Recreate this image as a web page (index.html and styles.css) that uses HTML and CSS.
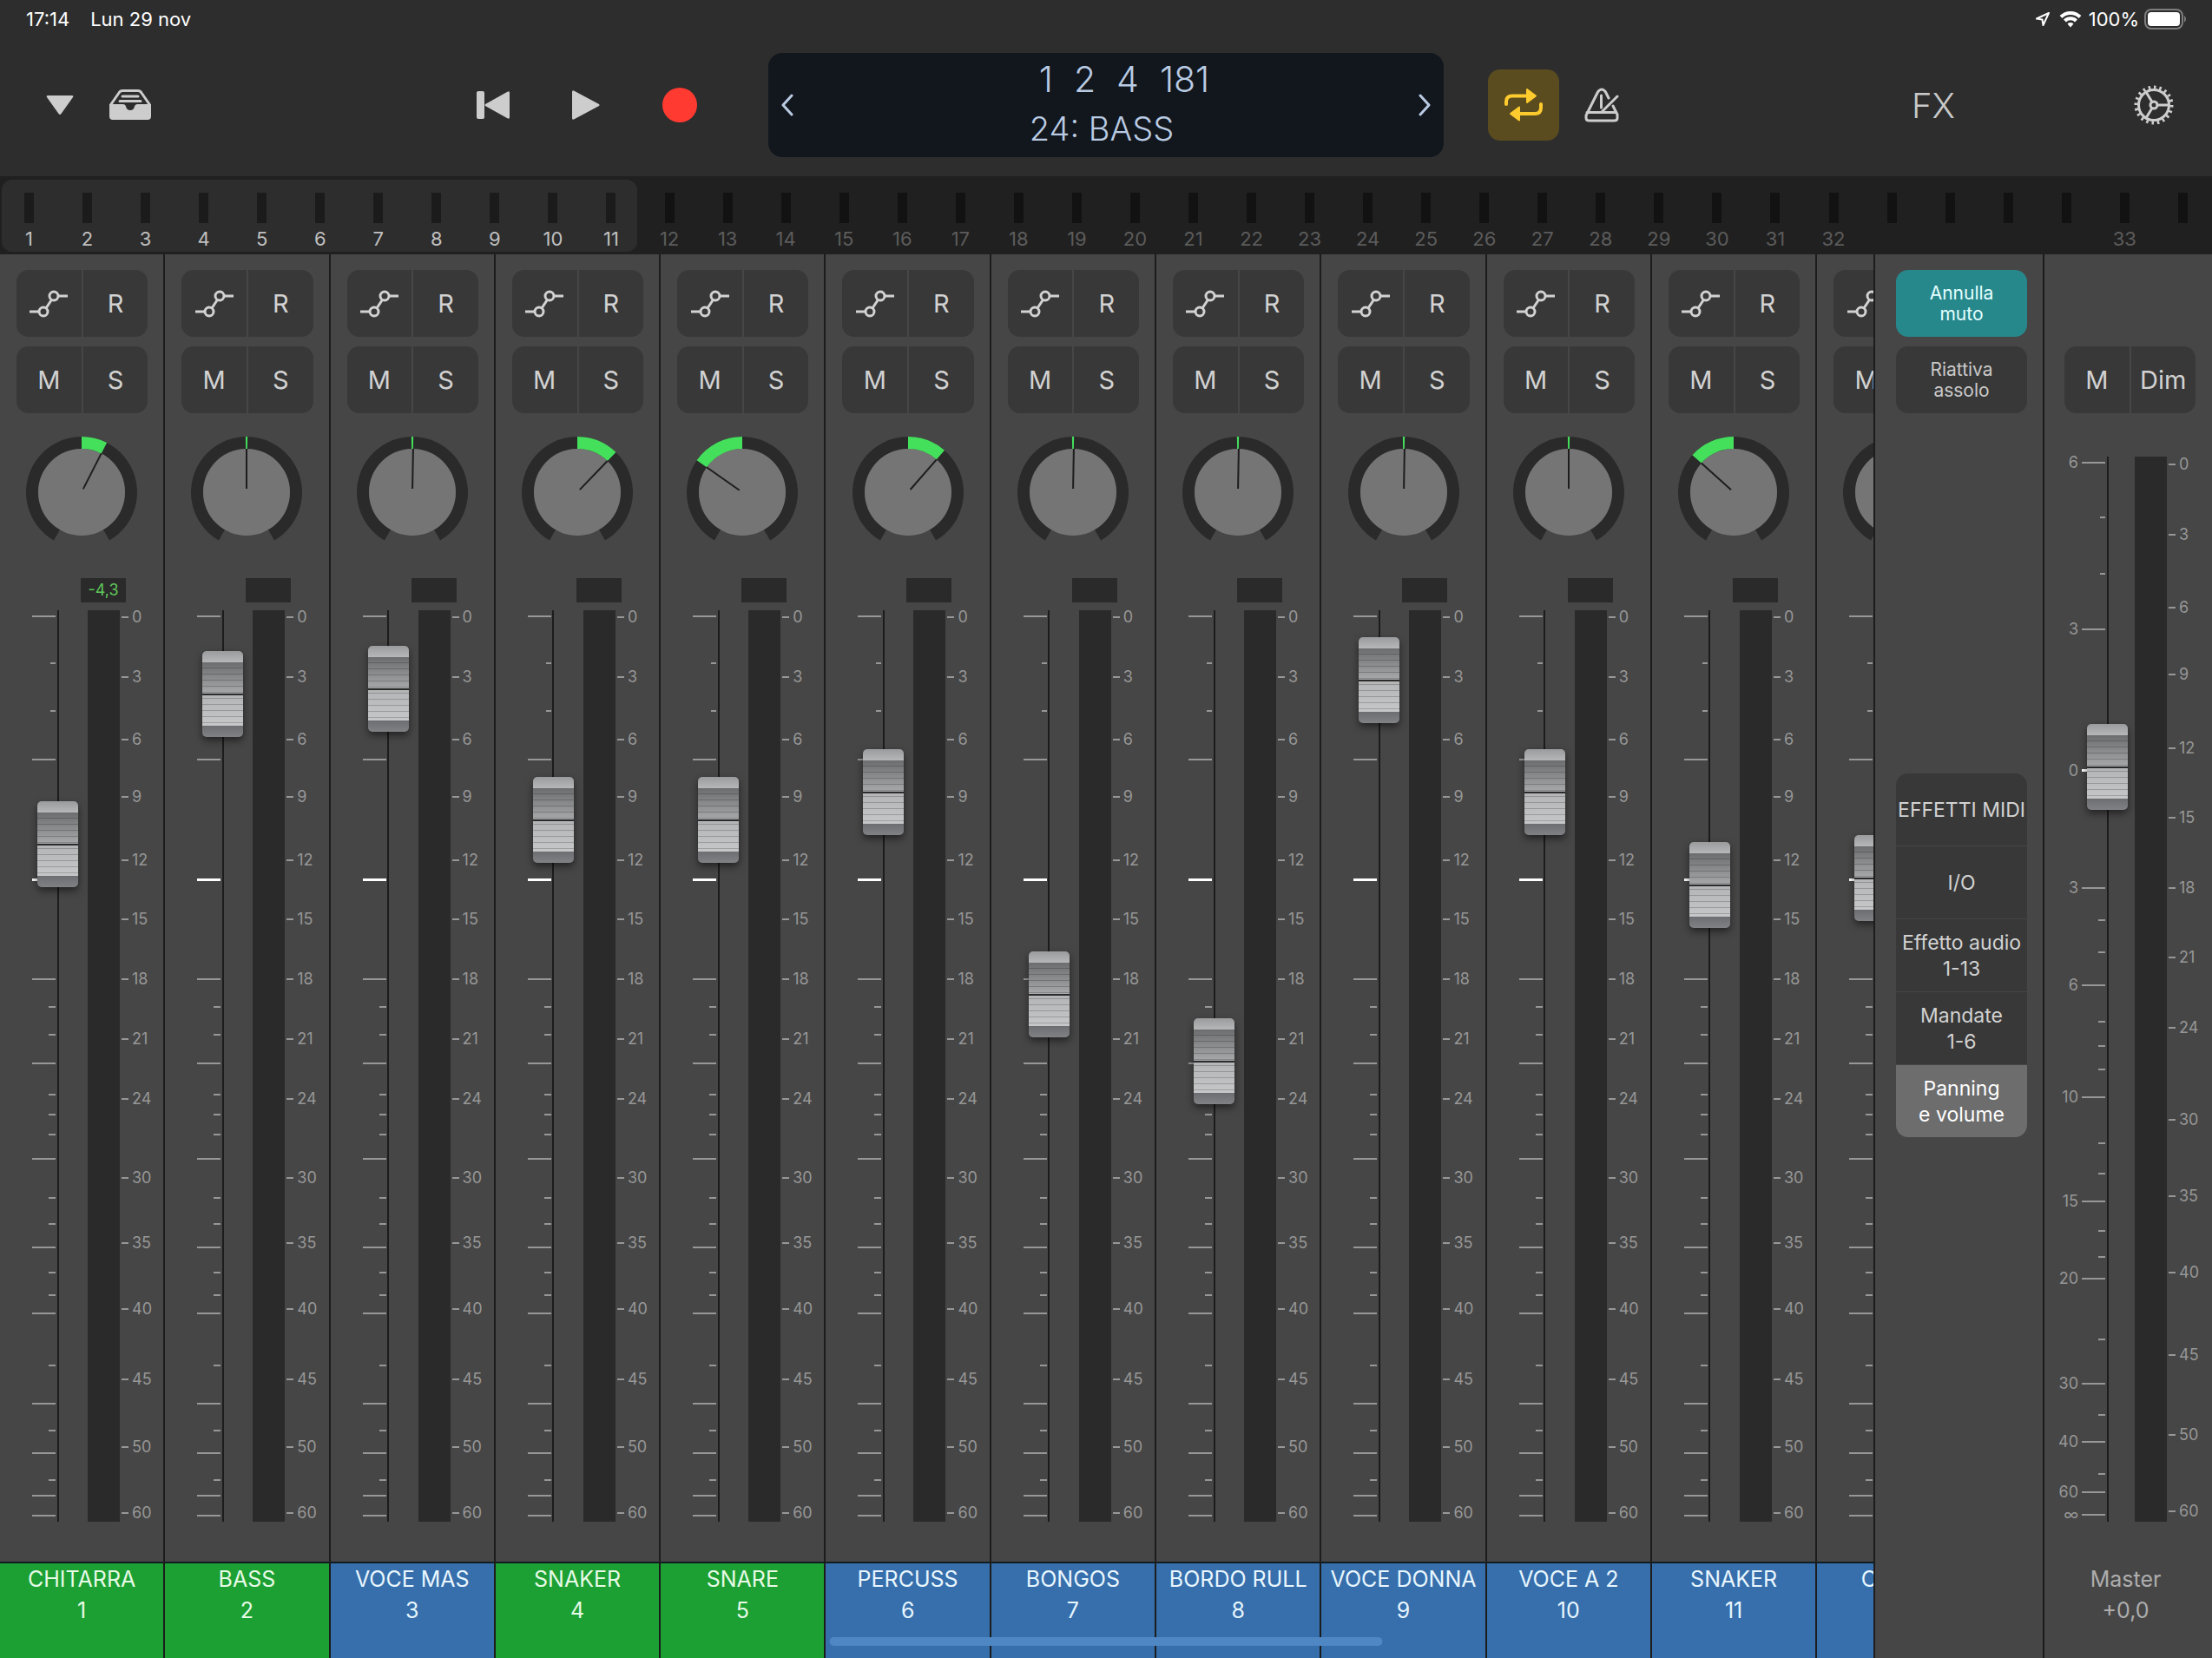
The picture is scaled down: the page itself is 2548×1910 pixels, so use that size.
FILE: index.html
```html
<!DOCTYPE html>
<html lang="it">

<head>
    <meta charset="UTF-8" />
    <meta name="viewport" content="width=device-width, initial-scale=1.0" />
    <title>Mixer</title>
    <link rel="stylesheet" href="styles.css">
</head>

<body>
    <div class="status">
        <span>17:14</span>
        <span class="date">Lun 29 nov</span>
        <svg class="location" width="18" height="18" viewBox="0 0 18 18">
            <path d="M16 2 L2 8.5 L8.5 9.5 L9.5 16 Z" />
        </svg>
        <svg class="wifi" width="26" height="20" viewBox="0 0 26 20">
            <path d="M2 7.5 A15.5 15.5 0 0 1 24 7.5" />
            <path d="M6.5 12 A9.2 9.2 0 0 1 19.5 12" />
            <path class="dot" d="M13 19.5 L9.5 15.5 A5 5 0 0 1 16.5 15.5 Z" />
        </svg>
        <span>100%</span>
        <svg class="battery" width="50" height="24" viewBox="0 0 50 24">
            <rect class="shell" x="1" y="1" width="43" height="22" rx="7" />
            <rect class="charge" x="4" y="4" width="37" height="16" rx="4" />
            <path class="tip" d="M46 8 A5 5 0 0 1 46 16 Z" />
        </svg>
    </div>

    <header class="toolbar">
        <div class="side left">
            <button class="tool" type="button" aria-label="Menu">
                <svg width="32" height="24" viewBox="0 0 32 24">
                    <path class="fill" d="M2 1 H30 Q32 1 31 3 L17.5 22 Q16 24 14.5 22 L1 3 Q0 1 2 1 Z" />
                </svg>
            </button>
            <button class="tool tray" type="button" aria-label="Browser">
                <svg width="48" height="36" viewBox="0 0 48 36">
                    <path class="line" d="M2 17 L11 4 Q12.500 1.500 15 1.500 H33 Q35.500 1.500 37 4 L46 17" />
                    <path class="line" d="M15 8 H33 M12 13.500 H36" />
                    <path class="fill" d="M0 17 H16 Q18.500 17 19 19.500 Q20 24 24 24 Q28 24 29 19.500 Q29.500 17 32 17 H48 V31 Q48 35 44 35 H4 Q0 35 0 31 Z" />
                </svg>
            </button>
            <div class="transport">
                <button class="tool" type="button" aria-label="Inizio">
                    <svg width="38" height="34" viewBox="0 0 38 34">
                        <rect class="fill" x="0" y="1" width="9" height="32" rx="2" />
                        <path class="fill" d="M35 2 Q38 0 38 3 V31 Q38 34 35 32 L10 18 Q9 17 10 16 Z" />
                    </svg>
                </button>
                <button class="tool" type="button" aria-label="Riproduci">
                    <svg width="32" height="34" viewBox="0 0 32 34">
                        <path class="fill" d="M0 2 Q0 -1 3 1 L31 16 Q32 17 31 18 L3 33 Q0 35 0 32 Z" />
                    </svg>
                </button>
                <button class="tool record" type="button" aria-label="Registra"></button>
            </div>
        </div>

        <div class="lcd">
            <button class="arrow" type="button" aria-label="Precedente">
                <svg width="14" height="26" viewBox="0 0 14 26"><path d="M12 2 L2 13 L12 24" /></svg>
            </button>
            <div class="readout">
                <div class="position"><span>1</span><span>2</span><span>4</span><span>181</span></div>
                <div class="track">24: BASS</div>
            </div>
            <button class="arrow" type="button" aria-label="Successivo">
                <svg width="14" height="26" viewBox="0 0 14 26"><path d="M2 2 L12 13 L2 24" /></svg>
            </button>
        </div>

        <div class="side right">
            <button class="cycle" type="button" aria-label="Ciclo">
                <svg width="44" height="38" viewBox="0 0 44 38">
                    <path class="loop" d="M2 18 V15 Q2 8.500 9 8.500 H27 M42 18 V22 Q42 29 35 29 H16" />
                    <path class="head" d="M26 1 L36 8.500 L26 16 Z M17 21.500 L7 29 L17 36.500 Z" />
                </svg>
            </button>
            <button class="tool metronome" type="button" aria-label="Metronomo">
                <svg width="40" height="40" viewBox="0 0 40 40">
                    <path class="line" d="M28 12 L24.500 5 Q20 -1 15.500 5 L2 32 V35 Q2 38 6 38 H34 Q38 38 38 35 V31 L33 21 M3 28.500 H37 M19.500 9 V23 M20 28 L38 10" />
                </svg>
            </button>
            <button class="tool fx" type="button">FX</button>
            <button class="tool gear" type="button" aria-label="Impostazioni">
                <svg width="46" height="46" viewBox="-23 -23 46 46">
                    <circle class="teeth" r="20.500" pathLength="100" />
                    <circle class="line" r="17.500" />
                    <circle class="line" r="4" />
                    <path class="line" d="M4 0 H17 M-2 -3.500 L-9 -15 M-2 3.500 L-9 15" />
                </svg>
            </button>
        </div>
    </header>

    <div class="ruler" id="ruler"></div>

    <main class="mixer">
        <div class="strips" id="strips"></div>

        <section class="panel">
            <div class="panel-top">
                <button class="pad active" type="button">Annulla<br>muto</button>
                <button class="pad" type="button">Riattiva<br>assolo</button>
            </div>
            <div class="views">
                <button type="button">EFFETTI MIDI</button>
                <button type="button">I/O</button>
                <button type="button">Effetto audio<br>1-13</button>
                <button type="button">Mandate<br>1-6</button>
                <button class="selected" type="button">Panning<br>e volume</button>
            </div>
        </section>

        <section class="master">
            <div class="pair">
                <button type="button">M</button>
                <button type="button">Dim</button>
            </div>
            <div class="level">
                <ol class="gain" id="masterGain"></ol>
                <input class="fader" type="range" min="0" max="1000" value="727" aria-label="Volume Master">
                <div class="meter"></div>
                <ol class="scale" id="masterScale"></ol>
            </div>
            <div class="label">Master<br>+0,0</div>
        </section>
    </main>

    <div class="home-bar"></div>

    <script>
        var channels = [
            { name: "CHITARRA", color: "green", pan: 27, level: 769, peak: "-4,3" },
            { name: "BASS", color: "green", pan: 0, level: 951 },
            { name: "VOCE MAS", color: "blue", pan: 1, level: 957 },
            { name: "SNAKER", color: "green", pan: 44, level: 798 },
            { name: "SNARE", color: "green", pan: -55, level: 798 },
            { name: "PERCUSS", color: "blue", pan: 41, level: 832 },
            { name: "BONGOS", color: "blue", pan: 1, level: 587 },
            { name: "BORDO RULL", color: "blue", pan: 1, level: 506 },
            { name: "VOCE DONNA", color: "blue", pan: 1, level: 967 },
            { name: "VOCE A 2", color: "blue", pan: 0, level: 832 },
            { name: "SNAKER", color: "blue", pan: -48, level: 719 },
            { name: "CAJON", color: "blue", pan: 0, level: 728 }
        ];

        // distance from the top of the fader, mark type, optional text
        var gainMarks = [
            [7, "long"], [61, "tiny"], [116, "tiny"], [172, "long"], [311, "unity"], [425, "long"],
            [457, "short"], [489, "short"], [522, "long"], [558, "short"], [581, "short"], [604, "short"],
            [632, "long"], [677, "short"], [707, "short"], [734, "long"], [763, "short"], [789, "short"],
            [810, "long"], [870, "short"], [914, "long"], [945, "short"], [971, "long"], [1002, "short"],
            [1020, "long"], [1043, "long"], [1050, "end"]
        ];
        var scaleMarks = [
            [8, "short", "0"], [77, "short", "3"], [149, "short", "6"], [215, "short", "9"],
            [288, "short", "12"], [356, "short", "15"], [425, "short", "18"], [494, "short", "21"],
            [563, "short", "24"], [654, "short", "30"], [729, "short", "35"], [805, "short", "40"],
            [886, "short", "45"], [964, "short", "50"], [1040, "short", "60"], [1050, "end"]
        ];
        var masterGainMarks = [
            [7, "long", "6"], [70, "tiny"], [135, "tiny"], [199, "long", "3"], [362, "unity", "0"],
            [497, "long", "3"], [534, "short"], [571, "short"], [609, "long", "6"], [651, "short"],
            [679, "short"], [706, "short"], [738, "long", "10"], [791, "short"], [826, "short"],
            [858, "long", "15"], [892, "short"], [922, "short"], [947, "long", "20"], [1017, "short"],
            [1068, "long", "30"], [1104, "short"], [1135, "long", "40"], [1172, "short"],
            [1193, "long", "60"], [1219, "long", "∞"], [1227, "end"]
        ];
        var masterScaleMarks = [
            [9, "short", "0"], [90, "short", "3"], [174, "short", "6"], [251, "short", "9"],
            [336, "short", "12"], [416, "short", "15"], [497, "short", "18"], [577, "short", "21"],
            [658, "short", "24"], [764, "short", "30"], [852, "short", "35"], [940, "short", "40"],
            [1035, "short", "45"], [1127, "short", "50"], [1215, "short", "60"], [1227, "end"]
        ];

        function marksHtml(marks) {
            var last = 0;
            return marks.map(function (mark) {
                var gap = mark[0] - last;
                last = mark[0];
                return `<li class="${mark[1]}" style="flex-grow:${gap}">${mark[2] ? `<span>${mark[2]}</span>` : ""}</li>`;
            }).join("");
        }

        function point(angle, radius) {
            var a = angle * Math.PI / 180;
            return (radius * Math.sin(a)).toFixed(1) + " " + (-radius * Math.cos(a)).toFixed(1);
        }

        function arc(from, to) {
            var large = to - from > 180 ? 1 : 0;
            return `M${point(from, 57)} A57 57 0 ${large} 1 ${point(to, 57)}`;
        }

        function knobHtml(pan, name) {
            // a centred knob still shows a thin green mark
            var from = Math.min(pan, -1);
            var to = Math.max(pan, 1);
            if (pan > 1) from = 0;
            if (pan < -1) to = 0;
            return `<div class="knob">
                <svg width="128" height="128" viewBox="-64 -64 128 128">
                    <path class="ring" d="${arc(-150, 150)}" />
                    <circle class="disc" r="50" />
                    <path class="amount" d="${arc(from, to)}" />
                    <path class="needle" d="M${point(pan, 4)} L${point(pan, 50)}" />
                </svg>
                <input type="range" min="-150" max="150" value="${pan}" aria-label="Pan ${name}">
            </div>`;
        }

        var automationIcon = `<svg width="44" height="32" viewBox="0 0 44 32">
            <path d="M0 25 H11 M19 21 L25 12 M33 7 H44" />
            <circle cx="16" cy="25" r="5" />
            <circle cx="28" cy="7" r="5" />
        </svg>`;

        document.getElementById("strips").innerHTML = channels.map(function (ch, i) {
            return `<section class="strip">
                <div class="controls">
                    <div class="pair">
                        <button type="button" aria-label="Automazione">${automationIcon}</button>
                        <button type="button">R</button>
                    </div>
                    <div class="pair">
                        <button type="button">M</button>
                        <button type="button">S</button>
                    </div>
                    ${knobHtml(ch.pan, ch.name)}
                </div>
                <div class="peak">${ch.peak || ""}</div>
                <div class="level">
                    <ol class="gain">${marksHtml(gainMarks)}</ol>
                    <input class="fader" type="range" min="0" max="1000" value="${ch.level}" aria-label="Volume ${ch.name}">
                    <div class="meter"></div>
                    <ol class="scale">${marksHtml(scaleMarks)}</ol>
                </div>
                <div class="name ${ch.color}">${ch.name}<br>${i + 1}</div>
            </section>`;
        }).join("");

        document.getElementById("masterGain").innerHTML = marksHtml(masterGainMarks);
        document.getElementById("masterScale").innerHTML = marksHtml(masterScaleMarks);

        // 38 ticks: the first 11 are on screen, the master is number 33
        function rulerCells(from, to) {
            var html = "";
            for (var i = from; i <= to; i++) {
                var text = i <= 32 ? i : (i === 37 ? 33 : "");
                html += `<div class="cell">${text}</div>`;
            }
            return html;
        }
        document.getElementById("ruler").innerHTML =
            `<div class="cells visible">${rulerCells(1, 11)}</div><div class="cells rest">${rulerCells(12, 38)}</div>`;
    </script>
</body>

</html>
```
FILE: styles.css
```css
* {
    box-sizing: border-box;
}

body {
    margin: 0;
    height: 100vh;
    display: flex;
    flex-direction: column;
    overflow: hidden;
    background-color: #2d2d2d;
    color: #c9c9c9;
    font-family: Inter, "Liberation Sans", sans-serif;
    font-size: 22px;
}

button {
    margin: 0;
    padding: 0;
    border: none;
    background: none;
    color: inherit;
    font: inherit;
    cursor: pointer;
}

svg {
    display: block;
}

ol {
    list-style: none;
    margin: 0;
    padding: 0;
}

/* status bar */
.status {
    display: flex;
    align-items: center;
    height: 44px;
    padding: 0 28px 0 30px;
    color: white;
    flex: none;
}

.date {
    margin-left: 24px;
    margin-right: auto;
}

.location {
    fill: none;
    stroke: white;
    stroke-width: 2;
    stroke-linejoin: round;
}

.wifi {
    margin: 0 8px 0 10px;
    fill: none;
    stroke: white;
    stroke-width: 4;
}

.wifi .dot {
    fill: white;
    stroke: none;
}

.battery {
    margin-left: 6px;
}

.shell {
    fill: none;
    stroke: #7d7d7d;
    stroke-width: 2;
}

.charge {
    fill: white;
}

.tip {
    fill: #7d7d7d;
}

/* toolbar */
.toolbar {
    display: grid;
    grid-template-columns: 1fr 778px 1fr;
    align-items: center;
    height: 159px;
    padding-bottom: 5px;
    flex: none;
}

.side {
    display: flex;
    align-items: center;
}

.left {
    padding: 0 82px 0 53px;
}

.right {
    padding: 0 44px 0 51px;
}

.tool .fill {
    fill: #cdcdcd;
}

.tool .line {
    fill: none;
    stroke: #cdcdcd;
    stroke-width: 3;
    stroke-linecap: round;
    stroke-linejoin: round;
}

.tray {
    margin-left: 41px;
}

.transport {
    display: flex;
    align-items: center;
    gap: 72px;
    margin-left: auto;
}

.record {
    width: 40px;
    height: 40px;
    border-radius: 50%;
    background-color: #ff3a30;
}

.lcd {
    display: flex;
    align-items: center;
    height: 120px;
    padding: 0 15px;
    border-radius: 16px;
    background-color: #12161d;
    color: #b9cbe3;
    font-size: 41px;
    font-weight: 300;
    line-height: 57px;
}

.arrow svg {
    fill: none;
    stroke: #b9cbe3;
    stroke-width: 3;
    stroke-linecap: round;
    stroke-linejoin: round;
}

.readout {
    flex: 1;
    display: flex;
    flex-direction: column;
    align-items: center;
    padding-bottom: 2px;
}

.position {
    display: flex;
    gap: 24px;
    padding-left: 42px;
}

.track {
    padding-right: 10px;
    font-size: 38px;
}

.cycle {
    display: flex;
    align-items: center;
    justify-content: center;
    width: 82px;
    height: 82px;
    border-radius: 14px;
    background-color: #5a4c1f;
}

.loop {
    fill: none;
    stroke: #fecb2e;
    stroke-width: 4;
    stroke-linecap: round;
}

.head {
    fill: #fecb2e;
    stroke: #fecb2e;
    stroke-width: 2;
    stroke-linejoin: round;
}

.metronome {
    margin-left: 29px;
}

.fx {
    margin-left: auto;
    font-size: 40px;
    font-weight: 300;
}

.gear {
    margin-left: 206px;
}

.teeth {
    fill: none;
    stroke: #cdcdcd;
    stroke-width: 4;
    stroke-dasharray: 2 3;
}

/* track ruler */
.ruler {
    display: flex;
    height: 90px;
    background-color: #202020;
    flex: none;
}

.cells {
    display: flex;
    position: relative;
    padding-top: 19px;
    color: #5c5c5c;
}

.visible {
    flex: 11 1 0;
    color: #c0c0c0;
}

.rest {
    flex: 27 1 0;
}

.visible::before {
    content: "";
    position: absolute;
    inset: 4px 4px 3px 2px;
    border-radius: 12px;
    background-color: #2d2d2d;
}

.cell {
    flex: 1 1 0;
    position: relative;
    text-align: center;
    line-height: 22px;
}

.cell::before {
    content: "";
    display: block;
    width: 11px;
    height: 35px;
    margin: 0 auto 7px;
    background-color: #121212;
}

.visible .cell::before {
    background-color: #1b1b1b;
}

/* mixer */
.mixer {
    flex: 1;
    min-height: 0;
    display: grid;
    grid-template-columns: 1fr 195px 193px;
    grid-template-rows: 100%;
    background-color: #464646;
}

.strips {
    display: grid;
    grid-template-columns: repeat(12, calc(100% / 11.34));
    overflow: hidden;
    border-right: 2px solid #1c1c1c;
}

.strip {
    display: flex;
    flex-direction: column;
    border-right: 2px solid #1c1c1c;
}

.controls {
    display: flex;
    flex-direction: column;
    gap: 11px;
    padding: 18px 18px 0 19px;
}

.pair {
    display: grid;
    grid-template-columns: 1fr 1fr;
    gap: 2px;
    height: 77px;
    border-radius: 14px;
    overflow: hidden;
    flex: none;
}

.pair button {
    display: flex;
    align-items: center;
    justify-content: center;
    background-color: #383838;
    color: #d2d2d2;
    font-size: 29px;
}

.pair svg {
    fill: none;
    stroke: #d2d2d2;
    stroke-width: 3;
}

.knob {
    display: grid;
    justify-content: center;
    margin-top: 16px;
}

.knob svg,
.knob input {
    grid-area: 1 / 1;
}

.knob input {
    width: 100%;
    margin: 0;
    opacity: 0;
}

.ring,
.amount {
    fill: none;
    stroke: #2a2a2a;
    stroke-width: 14;
}

.amount {
    stroke: #44e05c;
}

.disc {
    fill: #757575;
}

.needle {
    stroke: #1d1d1d;
    stroke-width: 2;
}

.peak {
    width: 52px;
    height: 28px;
    margin: 35px 0 9px 93px;
    background-color: #2a2a2a;
    color: #5fc75a;
    font-size: 18px;
    line-height: 28px;
    text-align: center;
    flex: none;
}

.level {
    flex: 1;
    display: grid;
    grid-template-columns: 43px 21px 26px 11px 37px 1fr;
    grid-template-rows: 100%;
    min-height: 0;
    color: #979797;
    font-size: 18px;
}

.gain,
.scale {
    display: flex;
    flex-direction: column;
    grid-row: 1;
}

.gain {
    grid-column: 1 / 3;
}

.scale {
    grid-column: 6;
    padding-left: 2px;
}

/* every mark sits on the bottom edge of its item */
.gain li,
.scale li {
    display: flex;
    align-items: flex-end;
    flex-basis: 0;
    line-height: 0;
}

.gain li {
    flex-direction: row-reverse;
}

.gain li::before,
.scale li::before {
    content: "";
    width: 8px;
    height: 2px;
    margin-bottom: -1px;
    background-color: #979797;
}

.gain .long::before,
.gain .unity::before {
    width: 27px;
}

.gain .tiny::before {
    width: 6px;
}

.gain .unity::before {
    height: 3px;
    background-color: white;
}

.gain .end::before,
.scale .end::before {
    display: none;
}

.level li span {
    margin: 0 4px;
}

.fader {
    grid-column: 2 / 4;
    grid-row: 1;
    appearance: none;
    writing-mode: vertical-lr;
    direction: rtl;
    width: 47px;
    height: 100%;
    margin: 0;
    background: linear-gradient(#1c1c1c, #1c1c1c) center / 2px 100% no-repeat;
}

.fader::-webkit-slider-thumb {
    appearance: none;
    width: 47px;
    height: 99px;
    border-radius: 5px;
    background:
        linear-gradient(#2b2b2b, #2b2b2b) 0 49px / 100% 2px no-repeat,
        repeating-linear-gradient(transparent 0 6px, rgba(0, 0, 0, 0.2) 6px 7px) 0 13px / 100% 73px no-repeat,
        linear-gradient(#9a9b9d 0, #b6b7b9 13px, #6c6d6f 13px, #a8a9ab 49px, #b3b4b6 50px, #c6c7c9 86px, #6d6e71 86px, #808184 99px);
    box-shadow: 0 4px 8px rgba(0, 0, 0, 0.5);
}

.meter {
    grid-column: 5;
    grid-row: 1;
    background-color: #2a2a2a;
}

.name {
    height: 111px;
    margin-top: 46px;
    border-top: 2px solid #101c22;
    color: #e6fae6;
    font-size: 25px;
    line-height: 36px;
    text-align: center;
    white-space: nowrap;
    flex: none;
}

.green {
    background-color: #1ca033;
}

.blue {
    background-color: #366fab;
    color: #e8f6ff;
}

/* view selector */
.panel {
    display: grid;
    grid-template-rows: 1fr auto 1fr;
    padding: 0 18px 0 24px;
    border-right: 2px solid #1c1c1c;
}

.panel-top {
    display: flex;
    flex-direction: column;
    gap: 11px;
    padding-top: 18px;
}

.pad {
    height: 77px;
    border-radius: 14px;
    background-color: #383838;
    font-size: 21px;
    line-height: 24px;
}

.active {
    background-color: #27888c;
    color: #e4ffff;
}

.views {
    display: grid;
    gap: 1px;
    border-radius: 14px;
    overflow: hidden;
    padding-bottom: 2px;
}

.views button {
    height: 83px;
    background-color: #383838;
    color: #d2d2d2;
    font-size: 23px;
    line-height: 30px;
    white-space: nowrap;
}

.views .selected {
    border-radius: 0 0 14px 14px;
    background-color: #6d6d6d;
    color: white;
}

/* master */
.master {
    display: flex;
    flex-direction: column;
}

.master .pair {
    margin: 106px 19px 50px 23px;
}

.master .level {
    grid-template-columns: 49px 21px 26px 8px 37px 1fr;
}

.label {
    height: 111px;
    margin-top: 46px;
    padding: 2px 6px 0 0;
    color: #adadad;
    font-size: 25px;
    line-height: 36px;
    text-align: center;
    flex: none;
}

/* overlay at the bottom of the screen */
.home-bar {
    position: absolute;
    left: 50%;
    bottom: 14px;
    width: 25%;
    height: 10px;
    border-radius: 5px;
    background-color: #4f86c4;
    transform: translateX(-50%);
}
```
